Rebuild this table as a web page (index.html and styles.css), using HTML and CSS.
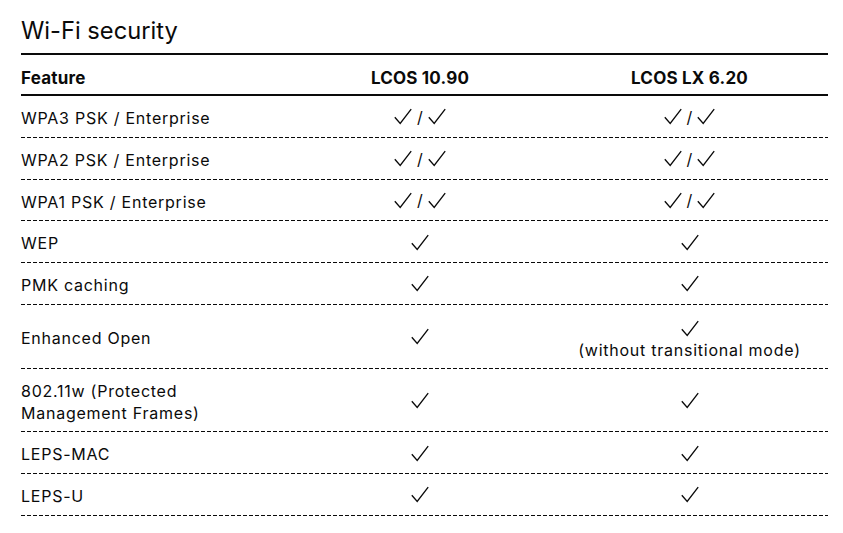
FILE: index.html
```html
<!DOCTYPE html>
<html lang="en">
<head>
<meta charset="utf-8">
<title>Wi-Fi security</title>
<link rel="stylesheet" href="styles.css">
</head>
<body>
<svg width="0" height="0" class="defs" aria-hidden="true">
  <defs>
    <symbol id="chk" viewBox="0 0 18 17">
      <polyline points="0.8,9.2 6.2,15.4 17.2,1.2" fill="none" stroke="#0a0a0a" stroke-width="1.35" stroke-linejoin="miter"/>
    </symbol>
  </defs>
</svg>
<main class="page">
  <h1 class="title">Wi-Fi security</h1>
  <div class="table">
    <div class="row head">
      <div class="cell feat">Feature</div>
      <div class="cell val">LCOS 10.90</div>
      <div class="cell val">LCOS LX 6.20</div>
    </div>
    <div class="row">
      <div class="cell feat">WPA3 PSK / Enterprise</div>
      <div class="cell val"><span class="pair"><svg class="ck"><use href="#chk"/></svg><span class="sl">/</span><svg class="ck"><use href="#chk"/></svg></span></div>
      <div class="cell val"><span class="pair"><svg class="ck"><use href="#chk"/></svg><span class="sl">/</span><svg class="ck"><use href="#chk"/></svg></span></div>
    </div>
    <div class="row">
      <div class="cell feat">WPA2 PSK / Enterprise</div>
      <div class="cell val"><span class="pair"><svg class="ck"><use href="#chk"/></svg><span class="sl">/</span><svg class="ck"><use href="#chk"/></svg></span></div>
      <div class="cell val"><span class="pair"><svg class="ck"><use href="#chk"/></svg><span class="sl">/</span><svg class="ck"><use href="#chk"/></svg></span></div>
    </div>
    <div class="row">
      <div class="cell feat">WPA1 PSK / Enterprise</div>
      <div class="cell val"><span class="pair"><svg class="ck"><use href="#chk"/></svg><span class="sl">/</span><svg class="ck"><use href="#chk"/></svg></span></div>
      <div class="cell val"><span class="pair"><svg class="ck"><use href="#chk"/></svg><span class="sl">/</span><svg class="ck"><use href="#chk"/></svg></span></div>
    </div>
    <div class="row">
      <div class="cell feat">WEP</div>
      <div class="cell val"><svg class="ck"><use href="#chk"/></svg></div>
      <div class="cell val"><svg class="ck"><use href="#chk"/></svg></div>
    </div>
    <div class="row">
      <div class="cell feat">PMK caching</div>
      <div class="cell val"><svg class="ck"><use href="#chk"/></svg></div>
      <div class="cell val"><svg class="ck"><use href="#chk"/></svg></div>
    </div>
    <div class="row">
      <div class="cell feat">Enhanced Open</div>
      <div class="cell val"><svg class="ck"><use href="#chk"/></svg></div>
      <div class="cell val stack"><span class="ckline"><svg class="ck"><use href="#chk"/></svg></span><span>(without transitional mode)</span></div>
    </div>
    <div class="row">
      <div class="cell feat">802.11w (Protected<br>Management Frames)</div>
      <div class="cell val"><svg class="ck"><use href="#chk"/></svg></div>
      <div class="cell val"><svg class="ck"><use href="#chk"/></svg></div>
    </div>
    <div class="row">
      <div class="cell feat">LEPS-MAC</div>
      <div class="cell val"><svg class="ck"><use href="#chk"/></svg></div>
      <div class="cell val"><svg class="ck"><use href="#chk"/></svg></div>
    </div>
    <div class="row">
      <div class="cell feat">LEPS-U</div>
      <div class="cell val"><svg class="ck"><use href="#chk"/></svg></div>
      <div class="cell val"><svg class="ck"><use href="#chk"/></svg></div>
    </div>
  </div>
</main>
</body>
</html>
```

FILE: styles.css
```css
html, body {
  margin: 0;
  padding: 0;
  background: #fff;
}
body {
  font-family: Inter, "Noto Sans", "Liberation Sans", sans-serif;
  color: #0a0a0a;
}
.defs {
  position: absolute;
  width: 0;
  height: 0;
}
.page {
  padding: 16px 15px 0 21px;
}
.title {
  margin: 0 0 7px;
  font-size: 23.7px;
  line-height: 30px;
  font-weight: 400;
  letter-spacing: 0;
}
.table {
  border-top: 2px solid #0a0a0a;
}
.row {
  display: grid;
  grid-template-columns: 268px 262px 277px;
  align-items: center;
  font-size: 16px;
  line-height: 22px;
  letter-spacing: 0.75px;
  background: linear-gradient(to right, #0a0a0a 4px, transparent 4px) left bottom / 6px 1px repeat-x;
}
.cell.feat {
  padding: 11px 0 8.75px;
}
.row.head {
  background: none;
  border-bottom: 2px solid #0a0a0a;
  font-size: 17px;
  font-weight: 700;
  letter-spacing: 0.2px;
}
.row.head .cell {
  padding: 12px 0 5px;
}
.cell.val {
  display: flex;
  flex-direction: column;
  align-items: center;
  text-align: center;
}
.cell.stack {
  padding: 12.5px 0 7.25px;
}
.ckline {
  height: 22px;
  display: flex;
  align-items: center;
}
.pair {
  display: flex;
  align-items: center;
  gap: 5px;
}
.sl {
  line-height: 22px;
  letter-spacing: 0;
}
.ck {
  width: 18px;
  height: 17px;
  display: block;
}
```
